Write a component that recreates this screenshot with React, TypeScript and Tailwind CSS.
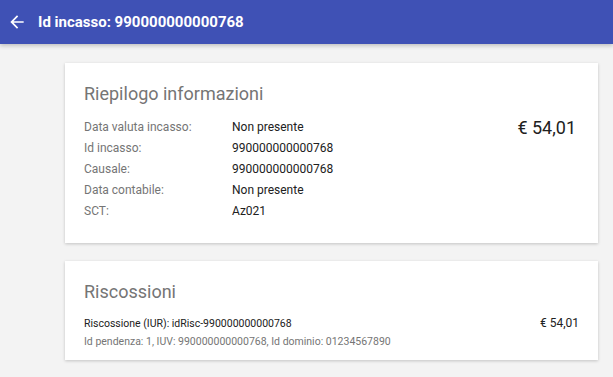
import React from "react";

const info: [string, string][] = [
  ["Data valuta incasso:", "Non presente"],
  ["Id incasso:", "990000000000768"],
  ["Causale:", "990000000000768"],
  ["Data contabile:", "Non presente"],
  ["SCT:", "Az021"],
];

function ArrowBack() {
  return (
    <svg viewBox="0 0 24 24" className="h-5 w-5 fill-white">
      <path d="M20 11H7.83l5.59-5.59L12 4l-8 8 8 8 1.41-1.41L7.83 13H20v-2z" />
    </svg>
  );
}

export default function App() {
  return (
    <div className="min-h-[377px] bg-[#f3f3f3] font-['Roboto',sans-serif]">
      {/* Header */}
      <div className="relative z-10 flex h-11 items-center bg-[#3f51b5] pl-[7px] shadow-[0_2px_4px_rgba(0,0,0,0.2)]">
        <ArrowBack />
        <h1 className="ml-[11px] text-[15px] font-bold text-white">Id incasso: 990000000000768</h1>
      </div>

      <div className="flex flex-col gap-[18px] pt-[19px] pl-[65px] pr-[15px]">
        {/* Riepilogo */}
        <div className="flex bg-white px-[19px] pt-[19px] pb-[22px] shadow-[0_1px_3px_rgba(0,0,0,0.2)]">
          <div className="flex-1">
            <h2 className="text-[18px] leading-6 text-[#757575]">Riepilogo informazioni</h2>
            <div className="mt-[10px] flex flex-col">
              {info.map(([label, value]) => (
                <div key={label} className="flex h-[21px] items-center text-[12px]">
                  <span className="w-[148px] text-[#757575]">{label}</span>
                  <span className="text-[#212121]">{value}</span>
                </div>
              ))}
            </div>
          </div>
          <div className="pt-[34px] pr-[3px] text-[18px] leading-6 text-[#212121]">€ 54,01</div>
        </div>

        {/* Riscossioni */}
        <div className="bg-white pl-[19px] pr-[19px] pt-[19px] pb-[9px] shadow-[0_1px_3px_rgba(0,0,0,0.2)]">
          <h2 className="text-[18px] leading-6 text-[#757575]">Riscossioni</h2>
          <div className="mt-[11px] flex items-start">
            <div className="flex-1">
              <div className="text-[10.5px] leading-[17px] text-[#212121]">
                Riscossione (IUR): idRisc-990000000000768
              </div>
              <div className="text-[10.5px] leading-[19px] text-[#757575]">
                Id pendenza: 1, IUV: 990000000000768, Id dominio: 01234567890
              </div>
            </div>
            <div className="text-[12px] leading-[17px] text-[#212121]">€ 54,01</div>
          </div>
        </div>
      </div>
    </div>
  );
}
